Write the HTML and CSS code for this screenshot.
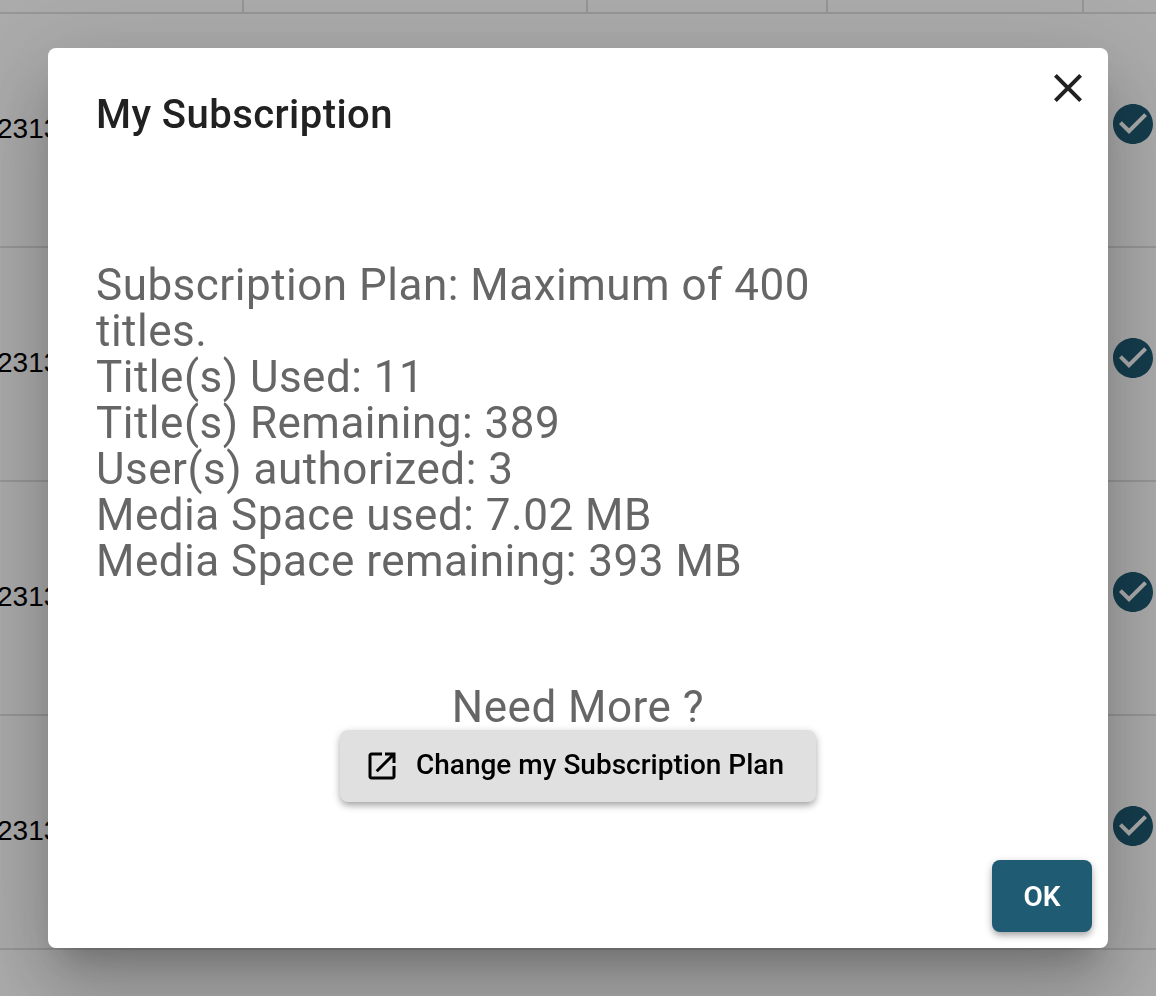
FILE: index.html
```html
<!DOCTYPE html>
<html lang="en">
<head>
<meta charset="utf-8">
<title>My Subscription</title>
<link rel="stylesheet" href="styles.css">
</head>
<body>
<div class="table">
  <div class="head-row">
    <div class="head-cell c1"></div>
    <div class="head-cell c2"></div>
    <div class="head-cell c3"></div>
    <div class="head-cell c4"></div>
    <div class="head-cell c5"></div>
  </div>
  <div class="row"><span class="num">23131</span><svg class="status" viewBox="0 0 24 24"><path d="M12 2C6.48 2 2 6.48 2 12s4.48 10 10 10 10-4.48 10-10S17.52 2 12 2zm-2 15l-5-5 1.41-1.41L10 14.17l7.59-7.59L19 8l-9 9z"/></svg></div>
  <div class="row"><span class="num">23131</span><svg class="status" viewBox="0 0 24 24"><path d="M12 2C6.48 2 2 6.48 2 12s4.48 10 10 10 10-4.48 10-10S17.52 2 12 2zm-2 15l-5-5 1.41-1.41L10 14.17l7.59-7.59L19 8l-9 9z"/></svg></div>
  <div class="row"><span class="num">23131</span><svg class="status" viewBox="0 0 24 24"><path d="M12 2C6.48 2 2 6.48 2 12s4.48 10 10 10 10-4.48 10-10S17.52 2 12 2zm-2 15l-5-5 1.41-1.41L10 14.17l7.59-7.59L19 8l-9 9z"/></svg></div>
  <div class="row"><span class="num">23131</span><svg class="status" viewBox="0 0 24 24"><path d="M12 2C6.48 2 2 6.48 2 12s4.48 10 10 10 10-4.48 10-10S17.52 2 12 2zm-2 15l-5-5 1.41-1.41L10 14.17l7.59-7.59L19 8l-9 9z"/></svg></div>
</div>
<div class="overlay">
  <div class="dialog">
    <button class="close" aria-label="Close"><svg viewBox="0 0 24 24"><path d="M19 6.41L17.59 5 12 10.59 6.41 5 5 6.41 10.59 12 5 17.59 6.41 19 12 13.41 17.59 19 19 17.59 13.41 12z"/></svg></button>
    <h2 class="title">My Subscription</h2>
    <div class="content">
      <p class="info">Subscription Plan: Maximum of 400 titles.<br>Title(s) Used: 11<br>Title(s) Remaining: 389<br>User(s) authorized: 3<br>Media Space used: 7.02 MB<br>Media Space remaining: 393 MB</p>
      <div class="more">
        <p class="more-text">Need More ?</p>
        <button class="change"><svg viewBox="0 0 24 24"><path d="M19 19H5V5h7V3H5c-1.11 0-2 .9-2 2v14c0 1.1.89 2 2 2h14c1.1 0 2-.9 2-2v-7h-2v7zM14 3v2h3.59l-9.83 9.83 1.41 1.41L19 6.41V10h2V3h-7z"/></svg><span class="change-label">Change my Subscription Plan</span></button>
      </div>
    </div>
    <div class="actions"><button class="ok">OK</button></div>
  </div>
</div>
</body>
</html>
```
FILE: styles.css
```css
html, body {
  margin: 0;
  height: 100%;
  overflow: hidden;
  background: #fff;
  font-family: Roboto, sans-serif;
}
.table {
  display: flex;
  flex-direction: column;
}
.head-row {
  display: flex;
  height: 12px;
  border-bottom: 2px solid #e0e0e0;
}
.head-cell {
  border-right: 2px solid #e0e0e0;
  flex: none;
}
.c1 { width: 242px; }
.c2 { width: 342px; }
.c3 { width: 238px; }
.c4 { width: 254px; }
.c5 { width: 72px; border-right: 0; }
.row {
  display: flex;
  align-items: center;
  justify-content: space-between;
  height: 232px;
  border-bottom: 2px solid #e0e0e0;
}
.num {
  font-family: "Liberation Sans", sans-serif;
  font-size: 28px;
  margin-left: -3px;
  margin-bottom: 2px;
  color: #000;
}
.status {
  width: 48px;
  height: 48px;
  fill: #1f5b73;
  margin-right: -1px;
  margin-bottom: 12px;
}
.overlay {
  position: fixed;
  inset: 0;
  background: rgba(0, 0, 0, 0.33);
  display: flex;
  align-items: center;
  justify-content: center;
}
.dialog {
  position: relative;
  box-sizing: border-box;
  width: 1060px;
  height: 900px;
  background: #fff;
  border-radius: 8px;
  box-shadow: 0 22px 30px -14px rgba(0,0,0,.2), 0 48px 76px 6px rgba(0,0,0,.14), 0 18px 92px 16px rgba(0,0,0,.12);
  display: flex;
  flex-direction: column;
}
.close {
  position: absolute;
  top: 16px;
  right: 16px;
  width: 48px;
  height: 48px;
  padding: 0;
  border: 0;
  background: none;
  fill: #212121;
}
.close svg { display: block; width: 48px; height: 48px; }
.title {
  margin: 0;
  padding: 45px 48px 0;
  font-size: 40px;
  line-height: 44px;
  letter-spacing: 0.45px;
  font-weight: 500;
  color: #212121;
}
.content {
  flex: 1;
  padding: 125px 48px 0;
}
.info {
  margin: 0;
  width: 760px;
  font-size: 44px;
  letter-spacing: 0.5px;
  line-height: 46px;
  color: #666;
}
.more {
  margin-top: 100px;
  display: flex;
  flex-direction: column;
  align-items: center;
}
.more-text {
  margin: 0;
  font-size: 44px;
  letter-spacing: 0.5px;
  line-height: 46px;
  color: #666;
}
.change {
  display: flex;
  align-items: center;
  height: 72px;
  padding: 0 32px 0 24px;
  border: 0;
  border-radius: 8px;
  background: #e0e0e0;
  color: #000;
  font: 500 28px Roboto, sans-serif;
  box-shadow: 0 4px 6px -2px rgba(0,0,0,.2), 0 4px 8px 0 rgba(0,0,0,.14), 0 2px 10px 0 rgba(0,0,0,.12);
}
.change svg { width: 36px; height: 36px; margin-right: 16px; fill: #000; }
.change-label { margin-bottom: 4px; }
.actions {
  display: flex;
  justify-content: flex-end;
  padding: 0 16px 16px;
}
.ok {
  width: 100px;
  height: 72px;
  border: 0;
  border-radius: 8px;
  background: #1f5b73;
  color: #fff;
  font: 600 28px Roboto, sans-serif;
  box-shadow: 0 4px 6px -2px rgba(0,0,0,.2), 0 4px 8px 0 rgba(0,0,0,.14), 0 2px 10px 0 rgba(0,0,0,.12);
}
```
